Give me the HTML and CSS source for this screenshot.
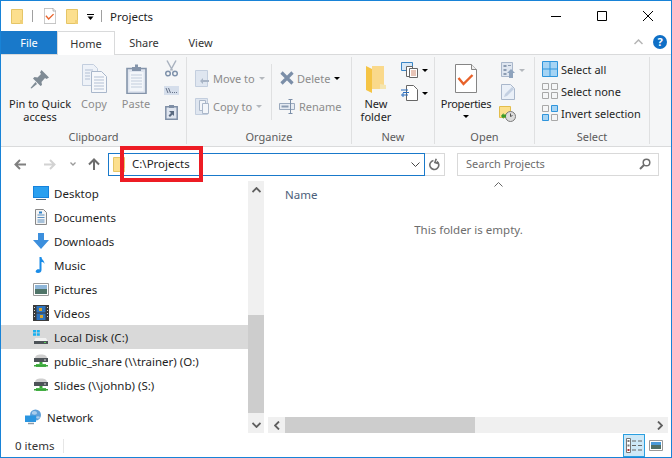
FILE: index.html
```html
<!doctype html>
<html>
  <head>
    <meta charset="utf-8">
    <title>Projects</title>
    <link rel="stylesheet" href="styles.css">
  </head>
  <body>
    <svg class="sprites" width="0" height="0">
      <symbol id="folder" viewBox="0 0 12 15">
        <path d="M.5.5h11v14H.5z" fill="#fcdf8e" stroke="#e5c566"/>
        <path d="M9 11h3v4H9z" fill="#f0d078"/>
      </symbol>
      <symbol id="propdoc" viewBox="0 0 22 29">
        <path d="M.5.5h16l5 5v23H.5z" fill="#fff" stroke="#858585"/>
        <path d="M16.5.5v5h5" fill="#eee" stroke="#858585"/>
        <path d="M3.500 14l5 6 9-9" fill="none" stroke="#e8622a" stroke-width="2.400"/>
      </symbol>
      <symbol id="caret" viewBox="0 0 6 3"><path d="M0 0h6L3 3z"/></symbol>
      <symbol id="caret-off" viewBox="0 0 6 3"><path d="M0 0h6L3 3z" fill="#b4b8bd"/></symbol>
      <symbol id="netdrive" viewBox="0 0 16 14">
        <path d="M2 5c0-3.500 2-4.500 6-4.500s6 1 6 4.500z" fill="#cfcfcf"/>
        <path d="M1 4h14v4H1z" fill="#4d5358"/>
        <path d="M11 5.500h2v1h-2z" fill="#d8d8d8"/>
        <path d="M6.500 8h3v2.500h-3z" fill="#3aa53a"/>
        <path d="M3 10h10v3H3z" fill="#4cb84c"/>
        <path d="M1 11h14v1.500H1z" fill="#3aa53a"/>
      </symbol>
      <symbol id="chev-v" viewBox="0 0 9 6"><path d="M.5 1l4 4 4-4" fill="none" stroke="#5f5f5f" stroke-width="1.800"/></symbol>
    </svg>

    <div class="window">
      <header class="titlebar">
        <div class="qat">
          <svg width="12" height="15"><use href="#folder"/></svg>
          <span class="qat-sep"></span>
          <svg width="12" height="16"><use href="#propdoc"/></svg>
          <svg class="qat-folder" width="12" height="15"><use href="#folder"/></svg>
          <svg class="qat-more" width="9" height="7" viewBox="0 0 9 7"><path d="M1 .5h7" stroke="#000"/><path d="M1.500 2.500h6L4.500 6z"/></svg>
          <span class="qat-sep qat-sep-last"></span>
        </div>
        <div class="title">Projects</div>
        <div class="winctl">
          <svg width="46" height="12" viewBox="0 0 46 12"><path d="M18 6.500h10" stroke="#000"/></svg>
          <svg width="46" height="12" viewBox="0 0 46 12"><path d="M18.500 1.500h9v9h-9z" fill="none" stroke="#000"/></svg>
          <svg width="46" height="12" viewBox="0 0 46 12"><path d="M18 1l10 10M28 1L18 11" stroke="#000" fill="none"/></svg>
        </div>
      </header>

      <nav class="tabs">
        <div class="tab tab-file">File</div>
        <div class="tab tab-home">Home</div>
        <div class="tab tab-share">Share</div>
        <div class="tab tab-view">View</div>
        <div class="tabs-right">
          <svg width="9" height="6" viewBox="0 0 9 6"><path d="M.5 5l4-4 4 4" fill="none" stroke="#b5b5b5" stroke-width="1.500"/></svg>
          <span class="help">?</span>
        </div>
      </nav>

      <section class="ribbon">
        <div class="group group-clipboard">
          <div class="group-body">
            <div class="big big-pin">
              <div class="big-icon">
                <svg width="20" height="20" viewBox="0 0 20 20">
                  <path d="M11.500 1L19 8.500 16.500 10 15 9l-3.500 4 .5 3-1.500 1L3 9.500 4.500 8l3 .5L11 5l-1-1.500z" fill="#7f8b95"/>
                  <path d="M5.500 13L.5 19l1 .5L7 15z" fill="#7f8b95"/>
                </svg>
              </div>
              <div>Pin to Quick<br>access</div>
            </div>
            <div class="big big-off big-copy">
              <div class="big-icon">
                <svg width="25" height="29" viewBox="0 0 25 29">
                  <path d="M.5.5h11l4 4v17H.5z" fill="#eef2f8" stroke="#c3cede"/>
                  <path d="M9.500 7.500h10l5 5v16h-15z" fill="#f6f8fb" stroke="#a9b7cb"/>
                  <path d="M12 13h10M12 16h10M12 19h10M12 22h10M12 25h10M3 6h8M3 9h5M3 12h5M3 15h5" stroke="#b3c0d4"/>
                </svg>
              </div>
              <div>Copy</div>
            </div>
            <div class="big big-off big-paste">
              <div class="big-icon">
                <svg width="21" height="30" viewBox="0 0 21 30">
                  <path d="M1 4.500h19v25H1z" fill="#dfe5ef" stroke="#8494aa" stroke-width="1.600"/>
                  <path d="M3.500 8h14v19h-14z" fill="#f3f6fa"/>
                  <path d="M5 11h11M5 14h11M5 17h11M5 20h11M5 23h11" stroke="#c2cddc"/>
                  <path d="M6 3h3V.500h3V3h3v4H6z" fill="#8494aa"/>
                </svg>
              </div>
              <div>Paste</div>
            </div>
            <div class="clip-small">
              <svg width="13" height="17" viewBox="0 0 13 17">
                <path d="M2 .5l5.500 10M11 .5L5.500 10.500" stroke="#a9b2bf" stroke-width="1.500" fill="none"/>
                <circle cx="3" cy="13.500" r="2.300" fill="none" stroke="#7f92ab" stroke-width="1.500"/>
                <circle cx="10" cy="13.500" r="2.300" fill="none" stroke="#7f92ab" stroke-width="1.500"/>
              </svg>
              <svg width="15" height="9" viewBox="0 0 15 9">
                <path d="M0 0h15v9H0z" fill="#d5deeb"/>
                <path d="M2 2l2 5M4.500 2l2 5" stroke="#66738a"/>
                <path d="M8 6.500h1M10 6.500h1M12 6.500h1" stroke="#66738a"/>
              </svg>
              <svg width="13" height="16" viewBox="0 0 13 16">
                <path d="M.8 2.800h11.400v12.400H.8z" fill="#dfe5ef" stroke="#7f8fa6" stroke-width="1.500"/>
                <path d="M4 1h5v3H4z" fill="#7f8fa6"/>
                <path d="M4 7h5v5L7.500 10.500 5 13 3.500 11.500 6 9z" fill="#5a6a80"/>
              </svg>
            </div>
          </div>
          <div class="group-label">Clipboard</div>
        </div>

        <div class="group group-organize">
          <div class="group-body">
            <div class="org-col org-col-move">
              <div class="row-off">
                <svg width="14" height="17" viewBox="0 0 14 17">
                  <path d="M.5.5h12v16H.5z" fill="#dfe6f0" stroke="#c3cede"/>
                  <path d="M5 11l3-3v2h6v2H8v2z" fill="#a8b4c5"/>
                </svg>
                <span class="row-text">Move to</span>
                <svg class="row-caret" width="6" height="3"><use href="#caret-off"/></svg>
              </div>
              <div class="row-off">
                <svg width="14" height="17" viewBox="0 0 14 17">
                  <path d="M.5.5h12v16H.5z" fill="#dfe6f0" stroke="#c3cede"/>
                  <path d="M4.500 2.500h6v10h-6z" fill="#f3f6fa" stroke="#aab7c9"/>
                  <path d="M7.500 5.500h6v10h-6z" fill="#f3f6fa" stroke="#aab7c9"/>
                </svg>
                <span class="row-text">Copy to</span>
                <svg class="row-caret" width="6" height="3"><use href="#caret-off"/></svg>
              </div>
            </div>
            <div class="org-col org-col-del">
              <div class="row-off">
                <svg class="del-x" width="14" height="14" viewBox="0 0 14 14"><path d="M1.500 1.500l11 11M12.500 1.500l-11 11" stroke="#7b8ea8" stroke-width="3.200"/></svg>
                <span class="row-text">Delete</span>
                <svg class="row-caret" width="6" height="3"><use href="#caret"/></svg>
              </div>
              <div class="row-off">
                <svg width="16" height="15" viewBox="0 0 16 15">
                  <path d="M.5 4.500h15v6H.5z" fill="#e6ebf2" stroke="#9aa9bd"/>
                  <path d="M2.500 6.500h7v2h-7z" fill="#8c9cb2"/>
                  <path d="M11.500 0v15M9.500.5h4M9.500 14.500h4" stroke="#7b8ea8" fill="none"/>
                </svg>
                <span class="row-text">Rename</span>
              </div>
            </div>
          </div>
          <div class="group-label">Organize</div>
        </div>

        <div class="group group-new">
          <div class="group-body">
            <div class="big big-newfolder">
              <div class="big-icon">
                <svg width="20" height="28" viewBox="0 0 20 28">
                  <path d="M6 1h12v23H6z" fill="#fad98b"/>
                  <path d="M0 1l6 3v24l-6-3z" fill="#f5c445"/>
                  <path d="M14 19l6 1v4h-6z" fill="#f5e5b0"/>
                </svg>
              </div>
              <div>New<br>folder</div>
            </div>
            <div class="new-small">
              <div class="new-row">
                <svg width="17" height="16" viewBox="0 0 17 16">
                  <path d="M.5.5h11v8H.5z" fill="#d8e8f6" stroke="#3a85c5"/>
                  <path d="M5.500 4.500h6v10h-6z" fill="#fff" stroke="#666"/>
                  <path d="M8.500 6.500h8v9h-8z" fill="#fff" stroke="#666"/>
                  <path d="M10 9h5M10 11h5M10 13h5" stroke="#d08a70"/>
                </svg>
                <svg width="6" height="3"><use href="#caret"/></svg>
              </div>
              <div class="new-row">
                <svg width="17" height="16" viewBox="0 0 17 16">
                  <path d="M5.500.5h7l4 4v11h-11z" fill="#fff" stroke="#666"/>
                  <path d="M0 5h7M2 7.500h6M0 10h7M2 8v4" stroke="#2a6fc0" fill="none"/>
                </svg>
                <svg width="6" height="3"><use href="#caret"/></svg>
              </div>
            </div>
          </div>
          <div class="group-label">New</div>
        </div>

        <div class="group group-open">
          <div class="group-body">
            <div class="big big-props">
              <div class="big-icon">
                <svg width="22" height="29"><use href="#propdoc"/></svg>
              </div>
              <div class="props-text">Properties</div>
              <svg class="props-caret" width="6" height="3"><use href="#caret"/></svg>
            </div>
            <div class="open-small">
              <div class="new-row">
                <svg width="14" height="16" viewBox="0 0 14 16">
                  <path d="M.5.5h11v14H.5z" fill="#dfe6f0" stroke="#a9b7cb"/>
                  <path d="M2.500 3h3v2h-3zM2.500 7h3v2h-3zM2.500 11h3v2h-3zM7 3h3v1H7z" fill="#8c9cb2"/>
                  <path d="M10 7l4 4h-2v5H8v-5H6z" fill="#8ea3bd"/>
                </svg>
                <svg width="6" height="3"><use href="#caret-off"/></svg>
              </div>
              <svg class="open-edit" width="14" height="16" viewBox="0 0 14 16">
                <path d="M.5.5h9l4 4v11H.5z" fill="#eaf0f8" stroke="#a9b7cb"/>
                <path d="M3 13l1-3 7-7 2 2-7 7z" fill="#c3d0e2"/>
              </svg>
              <svg class="open-hist" width="17" height="16" viewBox="0 0 17 16">
                <path d="M.5.5h11v11H.5z" fill="#fce08c" stroke="#e3bd4c"/>
                <circle cx="11.500" cy="10.500" r="5" fill="#dcdcdc" stroke="#7a7a7a"/>
                <path d="M11.500 7.500v3l2-1" stroke="#555" fill="none"/>
                <path d="M2 10l2.500-3v1.500h2.500v3H4.500V13z" fill="#3a9a2a"/>
              </svg>
            </div>
          </div>
          <div class="group-label">Open</div>
        </div>

        <div class="group group-select">
          <div class="group-body sel-list">
            <div class="sel-row">
              <svg width="16" height="16" viewBox="0 0 16 16">
                <path d="M.5.500h15v15H.5z" fill="#a6d4f4" stroke="#2f95dc"/>
                <path d="M8 0v16M0 8h16" stroke="#2f95dc"/>
              </svg>
              <span>Select all</span>
            </div>
            <div class="sel-row">
              <svg width="16" height="16" viewBox="0 0 16 16">
                <path d="M.5.500h6v6h-6zM9.500.500h6v6h-6zM.5 9.500h6v6h-6zM9.500 9.500h6v6h-6z" fill="none" stroke="#a8a8a8"/>
              </svg>
              <span>Select none</span>
            </div>
            <div class="sel-row">
              <svg width="16" height="16" viewBox="0 0 16 16">
                <path d="M.5.500h6v6h-6zM9.500 9.500h6v6h-6z" fill="none" stroke="#a8a8a8"/>
                <path d="M9.500.500h6v6h-6zM.5 9.500h6v6h-6z" fill="#a6d4f4" stroke="#2f95dc"/>
              </svg>
              <span>Invert selection</span>
            </div>
          </div>
          <div class="group-label">Select</div>
        </div>
      </section>

      <div class="addressrow">
        <div class="navbtns">
          <svg width="12" height="11" viewBox="0 0 12 11"><path d="M12 5.500H2M6 1L1.500 5.500 6 10" fill="none" stroke="#808080" stroke-width="2"/></svg>
          <svg class="nav-fwd" width="12" height="11" viewBox="0 0 12 11"><path d="M0 5.500h10M6 1l4.500 4.500L6 10" fill="none" stroke="#d2d2d2" stroke-width="2"/></svg>
          <svg class="nav-drop" width="6" height="4" viewBox="0 0 6 4"><path d="M.5.5L3 3 5.500.5" fill="none" stroke="#9a9a9a" stroke-width="1.300"/></svg>
          <svg class="nav-up" width="12" height="12" viewBox="0 0 12 12"><path d="M6 12V2M1 6.500L6 1.500l5 5" fill="none" stroke="#6d6d6d" stroke-width="2"/></svg>
        </div>
        <div class="addressbox">
          <svg class="addr-folder" width="12" height="15"><use href="#folder"/></svg>
          <span class="addr-text">C:\Projects</span>
          <svg class="addr-chev" width="9" height="5" viewBox="0 0 9 5"><path d="M.5.5l4 4 4-4" fill="none" stroke="#444"/></svg>
        </div>
        <div class="refresh">
          <svg width="11" height="13" viewBox="0 0 11 13"><path d="M6.500 2.700a4.500 4.500 0 1 1-3.500.500M5 .5v4h4" fill="none" stroke="#6f6f6f" stroke-width="1.600" transform="rotate(20 5.500 7)"/></svg>
        </div>
        <div class="searchbox">
          <span>Search Projects</span>
          <svg width="12" height="12" viewBox="0 0 12 12"><circle cx="7.500" cy="4.500" r="3.300" fill="none" stroke="#6d6d6d" stroke-width="1.500"/><path d="M5 7l-4 4" stroke="#6d6d6d" stroke-width="2"/></svg>
        </div>
      </div>

      <div class="main">
        <aside class="navpane">
          <div class="navitem">
            <svg width="16" height="14" viewBox="0 0 16 14"><path d="M0 0h16v12H0z" fill="#1582dc"/><path d="M1 1h14v10H1z" fill="#2aa0f0"/><path d="M3 13h10v1H3z" fill="#5a6a7a"/></svg>
            <span>Desktop</span>
          </div>
          <div class="navitem">
            <svg width="16" height="16" viewBox="0 0 16 16"><path d="M2.500.5h8l3 3v12h-11z" fill="#f4f4f4" stroke="#888"/><path d="M4.500 6h7M4.500 8.500h7M4.500 11h7M4.500 13h7" stroke="#5a8fc0"/><path d="M6 2.500h3v2H6z" fill="#2a7fc8"/></svg>
            <span>Documents</span>
          </div>
          <div class="navitem">
            <svg width="16" height="16" viewBox="0 0 16 16"><path d="M5 0h6v7h5l-8 9-8-9h5z" fill="#3c8fdd"/></svg>
            <span>Downloads</span>
          </div>
          <div class="navitem">
            <svg width="16" height="16" viewBox="0 0 16 16"><path d="M6.500 0h2c0 3 3 3 3 7-1-2-2-2-3-2v8c0 2-1.500 3-3.500 3S2 15 3 13.500s2.500-1.500 3.500-1z" fill="#1a8ce8"/></svg>
            <span>Music</span>
          </div>
          <div class="navitem">
            <svg width="16" height="13" viewBox="0 0 16 13"><path d="M.5.5h15v12H.5z" fill="#fff" stroke="#9a9a9a"/><path d="M2 2h12v4H2z" fill="#8fb6d8"/><path d="M2 6h12v5H2z" fill="#4f7468"/></svg>
            <span>Pictures</span>
          </div>
          <div class="navitem">
            <svg width="16" height="16" viewBox="0 0 16 16"><path d="M0 0h16v16H0z" fill="#3a3a3a"/><path d="M3.500 1h9v6.500h-9z" fill="#2d74c0"/><path d="M3.500 8.500h9V15h-9z" fill="#2d74c0"/><path d="M6 3h3v3H6zM7 10h3v3H7z" fill="#d8a72e"/><path d="M1 2h1v1H1zM1 5h1v1H1zM1 8h1v1H1zM1 11h1v1H1zM14 2h1v1h-1zM14 5h1v1h-1zM14 8h1v1h-1zM14 11h1v1h-1z" fill="#ddd"/></svg>
            <span>Videos</span>
          </div>
          <div class="navitem navitem-on">
            <svg width="16" height="16" viewBox="0 0 16 16"><path d="M0 1h3v2.500H0zM3.800 1h3v2.500h-3zM0 4.300h3v2.500H0zM3.800 4.300h3v2.500h-3z" fill="#19b0f0"/><path d="M2.500 9h10.500l1.500 3h-13.500z" fill="#f2f2f2"/><path d="M1 12h14v3H1z" fill="#4d5358"/><path d="M11 13h2v1h-2z" fill="#5fd35f"/></svg>
            <span>Local Disk (C:)</span>
          </div>
          <div class="navitem">
            <svg width="16" height="14"><use href="#netdrive"/></svg>
            <span>public_share (\\trainer) (O:)</span>
          </div>
          <div class="navitem">
            <svg width="16" height="14"><use href="#netdrive"/></svg>
            <span>Slides (\\johnb) (S:)</span>
          </div>
          <div class="navitem navitem-network">
            <svg width="17" height="16" viewBox="0 0 17 16"><circle cx="10.500" cy="6" r="5.500" fill="#5fa0d8"/><path d="M7 3c2-2 5-1 5 1s-3 2-5 1zM11 8c1-1 3-1 4 0-1 2-3 2-4 0z" fill="#a9cdec"/><path d="M0 6.500h11V13H0z" fill="#2a95e0"/><path d="M3 14.500h6" stroke="#8a9aaa" stroke-width="1.500"/></svg>
            <span>Network</span>
          </div>
        </aside>

        <div class="vscroll">
          <div class="sb-btn"><svg width="9" height="6" viewBox="0 0 9 6"><path d="M.5 5l4-4 4 4" fill="none" stroke="#5f5f5f" stroke-width="1.800"/></svg></div>
          <div class="vtrack"><div class="vthumb"></div></div>
          <div class="sb-btn"><svg width="9" height="6"><use href="#chev-v"/></svg></div>
        </div>

        <div class="content">
          <div class="sort-up"><svg width="9" height="5" viewBox="0 0 9 5"><path d="M.5 4.500l4-4 4 4" fill="none" stroke="#666"/></svg></div>
          <div class="col-head">Name</div>
          <div class="empty">This folder is empty.</div>
          <div class="hscroll">
            <div class="hs-btn"><svg width="6" height="9" viewBox="0 0 6 9"><path d="M5 .5l-4 4 4 4" fill="none" stroke="#5f5f5f" stroke-width="1.800"/></svg></div>
            <div class="hthumb"></div>
            <div class="htrack"></div>
            <div class="hs-btn"><svg width="6" height="9" viewBox="0 0 6 9"><path d="M1 .5l4 4-4 4" fill="none" stroke="#5f5f5f" stroke-width="1.800"/></svg></div>
          </div>
        </div>
      </div>

      <footer class="statusbar">
        <span class="status-text">0 items</span>
        <span class="status-sep"></span>
        <div class="viewbtn viewbtn-on">
          <svg width="17" height="15" viewBox="0 0 17 15">
            <path d="M.5.500h4v14h-4z" fill="#fff" stroke="#777"/>
            <path d="M1.500 2h2v2h-2zM1.500 6.500h2v2h-2z" fill="#777"/>
            <path d="M1.500 11h2v2h-2z" fill="#a33"/>
            <path d="M6 3h4M12 3h4M6 7.500h4M12 7.500h4M6 12h4M12 12h4" stroke="#666"/>
          </svg>
        </div>
        <div class="viewbtn">
          <svg width="14" height="11" viewBox="0 0 14 11"><path d="M.5.500h13v10H.5z" fill="#fff" stroke="#999"/><path d="M2 2h10v3H2z" fill="#4a9ad8"/><path d="M2 5h10v4H2z" fill="#4f6f66"/></svg>
        </div>
      </footer>

      <div class="redbox"></div>
    </div>
  </body>
</html>
```

FILE: styles.css
```css
* { box-sizing: border-box; }
html, body { margin: 0; padding: 0; background: #fff; }
body { font-family: "Noto Sans", "Open Sans", sans-serif; font-size: 11px; color: #1e1e1e; }
svg { display: block; flex: none; }
.sprites { position: absolute; }

.window {
  position: relative;
  width: 672px;
  height: 458px;
  border: 1px solid #1883d7;
  display: flex;
  flex-direction: column;
  overflow: hidden;
  background: #fff;
}

/* title bar */
.titlebar { height: 30px; display: flex; align-items: center; padding-left: 10px; flex: none; }
.qat { display: flex; align-items: center; }
.qat-sep { width: 1px; height: 12px; background: #a0a0a0; margin: 0 11px 0 9px; }
.qat-sep-last { margin: 0 8px 0 6px; }
.qat-folder { margin-left: 10px; }
.qat-more { margin-left: 8px; margin-top: 3px; }
.title { font-size: 11.5px; flex: 1; color: #222; }
.winctl { display: flex; }

/* tabs */
.tabs { height: 24px; display: flex; border-bottom: 1px solid #d9dadb; flex: none; }
.tab { height: 24px; line-height: 23px; text-align: center; font-size: 11px; color: #333; }
.tab-file { width: 56px; height: 23px; background: #1979ca; color: #fff; }
.tab-home { width: 58px; border: 1px solid #d9dadb; border-bottom: 0; background: #fff; position: relative; z-index: 1; }
.tab-share { width: 58px; }
.tab-view { width: 55px; }
.tabs-right { margin-left: auto; display: flex; align-items: center; gap: 10px; padding-right: 4px; height: 22px; }
.help {
  width: 14px;
  height: 14px;
  border-radius: 50%;
  background: #0f6fc6;
  color: #fff;
  font-size: 11px;
  font-weight: 700;
  line-height: 14px;
  text-align: center;
}

/* ribbon */
.ribbon { height: 92px; flex: none; display: flex; background: #f5f6f7; border-bottom: 1px solid #dadbdc; padding: 2px 0 2px; }
.group { display: flex; flex-direction: column; border-right: 1px solid #dfe0e1; flex: none; }
.group-clipboard { width: 186px; }
.group-organize { width: 165px; }
.group-new { width: 83px; }
.group-open { width: 100px; }
.group-select { width: 115px; }
.group-body { flex: 1; display: flex; padding-top: 3px; }
.group-label { height: 16px; line-height: 17px; text-align: center; color: #5c5c5c; font-size: 11px; }

.big { display: flex; flex-direction: column; align-items: center; text-align: center; line-height: 13px; flex: none; }
.big-icon { height: 37px; display: flex; align-items: center; justify-content: center; }
.big-off { color: #8c8c8c; }
.big-pin { width: 66px; margin-left: 6px; }
.big-copy { width: 40px; margin-left: 1px; }
.big-paste { width: 42px; margin-left: 1px; }
.clip-small { display: flex; flex-direction: column; align-items: center; width: 16px; margin-left: 6px; gap: 9px; }

.org-col { display: flex; flex-direction: column; gap: 2px; margin-top: 4px; padding-top: 1px; height: 56px; }
.org-col-move { width: 77px; margin-left: 8px; border-right: 1px solid #dfe0e1; }
.org-col-del { margin-left: 7px; }
.row-off { height: 27px; display: flex; align-items: center; color: #8c8c8c; }
.row-text { margin-left: 4px; }
.row-caret { margin-left: 4px; }
.del-x { margin-left: 1px; }
.del-x + .row-text { margin-left: 3px; }

.big-newfolder { width: 48px; }
.new-small { display: flex; flex-direction: column; gap: 7px; margin-left: 1px; margin-top: 2px; }
.new-row { display: flex; align-items: center; gap: 4px; }

.big-props { width: 56px; margin-left: 3px; }
.props-text { letter-spacing: -.3px; }
.props-caret { margin-top: 5px; }
.open-small { display: flex; flex-direction: column; margin-left: 7px; margin-top: 2px; }
.open-edit { margin-top: 6px; }
.open-hist { margin-top: 6px; margin-left: -2px; }

.sel-list { flex-direction: column; padding-left: 7px; padding-top: 4px; gap: 6px; }
.sel-row { height: 16px; display: flex; align-items: center; gap: 3px; white-space: nowrap; }

/* address row */
.addressrow { height: 34px; flex: none; display: flex; align-items: center; }
.navbtns { display: flex; align-items: center; width: 107px; padding-left: 13px; }
.nav-fwd { margin-left: 18px; }
.nav-drop { margin-left: 14px; }
.nav-up { margin-left: 12px; }
.addressbox {
  width: 317px;
  height: 23px;
  border: 1px solid #1979ca;
  display: flex;
  align-items: center;
  padding-left: 4px;
  font-size: 11.5px;
}
.addr-text { margin-left: 7px; flex: 1; padding-bottom: 2px; }
.addr-chev { margin-right: 4px; }
.refresh {
  width: 20px;
  height: 23px;
  border: 1px solid #d9d9d9;
  border-left: 0;
  display: flex;
  align-items: center;
  justify-content: center;
}
.searchbox {
  width: 202px;
  height: 23px;
  margin-left: 12px;
  border: 1px solid #d9d9d9;
  display: flex;
  align-items: center;
  justify-content: space-between;
  padding: 0 7px 0 8px;
  color: #6d6d6d;
}
.searchbox span { padding-bottom: 2px; }

/* main area */
.main { height: 253px; flex: none; display: flex; }
.navpane { width: 247px; flex: none; }
.navitem { height: 24px; display: flex; align-items: center; gap: 5px; padding-left: 32px; white-space: nowrap; font-size: 11.5px; }
.navitem-on { background: #d9d9d9; }
.navitem-network { margin-top: 8px; padding-left: 24px; }

.vscroll { width: 16px; flex: none; display: flex; flex-direction: column; background: #f0f0f0; height: 252px; }
.sb-btn { height: 17px; display: flex; align-items: center; justify-content: center; flex: none; }
.vtrack { flex: 1; padding-top: 117px; }
.vthumb { height: 98px; background: #cdcdcd; }

.content { flex: 1; display: flex; flex-direction: column; margin-left: 4px; }
.sort-up { height: 6px; margin-top: 1px; display: flex; justify-content: center; padding-left: 58px; }
.col-head { height: 20px; line-height: 14px; padding-left: 17px; color: #4c607a; font-size: 11.5px; }
.empty { text-align: center; color: #6d6d6d; font-size: 11.5px; margin-top: 14px; margin-right: 2px; }
.hscroll { margin-top: auto; margin-right: 3px; margin-bottom: 1px; height: 16px; display: flex; background: #f0f0f0; }
.hs-btn { width: 17px; display: flex; align-items: center; justify-content: center; flex: none; }
.hthumb { width: 190px; background: #cdcdcd; }
.htrack { flex: 1; }

/* status bar */
.statusbar { flex: 1; display: flex; align-items: center; padding-left: 14px; font-size: 11.5px; color: #333; }
.status-text { width: 48px; }
.status-sep { width: 1px; height: 14px; background: #e6e6e6; }
.viewbtn { width: 22px; height: 23px; display: flex; align-items: center; justify-content: center; }
.viewbtn-on { margin-left: auto; background: #cde8f7; border: 1px solid #2a9fe0; }
.viewbtn:last-child { margin-right: 4px; }

/* annotation */
.redbox { position: absolute; left: 119px; top: 145px; width: 83px; height: 36px; border: 4px solid #ed1c24; }
```
